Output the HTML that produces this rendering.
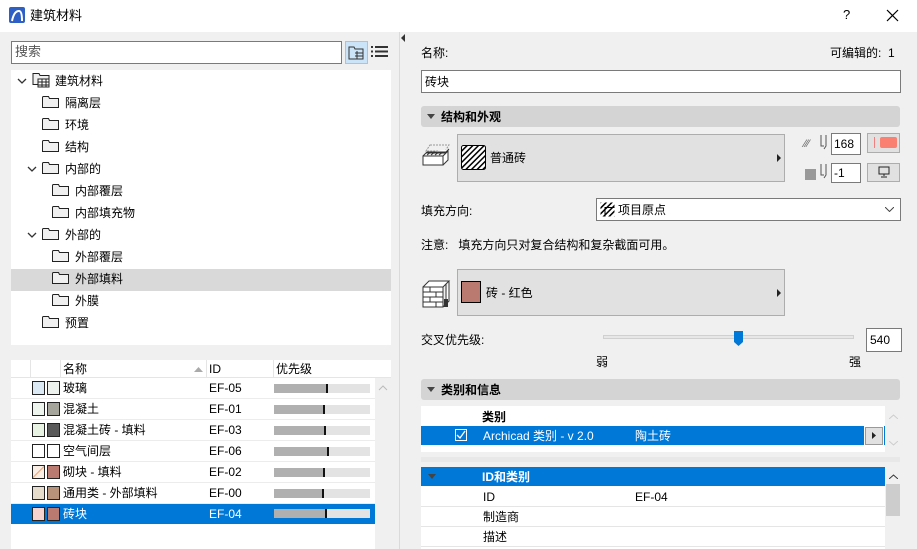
<!DOCTYPE html>
<html><head><meta charset="utf-8"><style>
*{box-sizing:border-box;margin:0;padding:0}
body{width:917px;height:549px;overflow:hidden;background:#f0f0f0;font-family:"Liberation Sans","Noto Sans CJK SC",sans-serif;font-size:12px;color:#000;position:relative}
.a{position:absolute}
.t{position:absolute;white-space:nowrap;line-height:14px}
.fold{position:absolute;width:17px;height:14px}
.row{position:absolute;left:11px;width:364px;height:21px;border-bottom:1px solid #ececec}
.sw{position:absolute;top:3px;width:13px;height:14px;border:1px solid #222}
.bar{position:absolute;left:274px;top:6px;width:96px;height:9px;background:#e3e3e3}
.bar i{position:absolute;left:0;top:0;height:9px;background:#b0b0b0;border-right:2px solid #111}
.sec{position:absolute;left:421px;width:479px;height:21px;background:#d4d4d4;border-radius:3px;font-weight:bold}
.btn{position:absolute;background:#e1e1e1;border:1px solid #adadad}
.inp{position:absolute;background:#fff;border:1px solid #7a7a7a}
</style></head><body>
<!-- title bar -->
<div class="a" style="left:0;top:0;width:917px;height:32px;background:#fff"></div>
<svg class="a" style="left:9px;top:7px" width="16" height="16"><rect x="0" y="0" width="16" height="16" rx="2" fill="#2d5fc4"/><path d="M3 14 Q5 4 10 4 Q13 4 13 14" stroke="#fff" stroke-width="2" fill="none"/></svg>
<div class="t" style="left:30px;top:9px;font-size:13px">建筑材料</div>
<div class="t" style="left:843px;top:8px;font-size:13px">?</div>
<svg class="a" style="left:886px;top:9px" width="13" height="13"><path d="M1 1L12 12M12 1L1 12" stroke="#000" stroke-width="1.2"/></svg>

<!-- search -->
<div class="inp" style="left:11px;top:41px;width:331px;height:23px"></div>
<div class="t" style="left:15px;top:45px;color:#555;font-size:13px">搜索</div>
<div class="a" style="left:345px;top:41px;width:23px;height:23px;background:#cce4f7;border:1px solid #99c9ef"></div>
<svg class="a" style="left:348px;top:45px" width="18" height="16"><path d="M1 2h5l1 2h8v10H1z" fill="none" stroke="#333"/><path d="M7 8h8M7 11h8M9 6v8" stroke="#333"/></svg>
<svg class="a" style="left:371px;top:45px" width="17" height="13"><g fill="#333"><rect x="0" y="1" width="2" height="2"/><rect x="4" y="1" width="13" height="2"/><rect x="0" y="5.5" width="2" height="2"/><rect x="4" y="5.5" width="13" height="2"/><rect x="0" y="10" width="2" height="2"/><rect x="4" y="10" width="13" height="2"/></g></svg>
<svg class="a" style="left:401px;top:34px" width="5" height="8"><path d="M4 0L0 4L4 8z" fill="#333"/></svg>
<div class="a" style="left:399px;top:32px;width:1px;height:517px;background:#dadada"></div>

<!-- tree -->
<div class="a" style="left:11px;top:70px;width:380px;height:275px;background:#fff"></div>
<div class="a" style="left:11px;top:269px;width:380px;height:22px;background:#d9d9d9"></div>
<svg class="a" style="left:0;top:70px" width="140" height="275">
<defs><g id="f"><path d="M0.5 2.5v10h16v-9h-9l-1-2h-5.5z" fill="#f0f0f0" stroke="#222"/></g>
<g id="c"><path d="M0 0l4 4l4-4" fill="none" stroke="#333" stroke-width="1.3"/></g></defs>
<use href="#c" x="18" y="9"/>
<use href="#c" x="28" y="97"/>
<use href="#c" x="28" y="163"/>
<path d="M33 4.5v10h16v-9h-9l-1-2h-6z" fill="#f0f0f0" stroke="#222"/>
<rect x="38" y="9" width="11" height="8" fill="#fff" stroke="#222"/><path d="M38 12h11M38 15h11M42 9v8M46 9v8" stroke="#222"/>
<use href="#f" x="42" y="25"/><use href="#f" x="42" y="47"/><use href="#f" x="42" y="69"/><use href="#f" x="42" y="91"/>
<use href="#f" x="52" y="113"/><use href="#f" x="52" y="135"/>
<use href="#f" x="42" y="157"/>
<use href="#f" x="52" y="179"/><use href="#f" x="52" y="201"/><use href="#f" x="52" y="223"/>
<use href="#f" x="42" y="245"/>
</svg>
<div class="t" style="left:55px;top:74px">建筑材料</div>
<div class="t" style="left:65px;top:96px">隔离层</div>
<div class="t" style="left:65px;top:118px">环境</div>
<div class="t" style="left:65px;top:140px">结构</div>
<div class="t" style="left:65px;top:162px">内部的</div>
<div class="t" style="left:75px;top:184px">内部覆层</div>
<div class="t" style="left:75px;top:206px">内部填充物</div>
<div class="t" style="left:65px;top:228px">外部的</div>
<div class="t" style="left:75px;top:250px">外部覆层</div>
<div class="t" style="left:75px;top:272px">外部填料</div>
<div class="t" style="left:75px;top:294px">外膜</div>
<div class="t" style="left:65px;top:316px">预置</div>

<!-- list -->
<div class="a" style="left:11px;top:360px;width:364px;height:189px;background:#fff"></div>
<div class="a" style="left:375px;top:360px;width:16px;height:189px;background:#f0f0f0"></div>
<div class="a" style="left:11px;top:360px;width:380px;height:18px;background:#fff;border-bottom:1px solid #e5e5e5"></div>
<div class="a" style="left:30px;top:360px;width:1px;height:18px;background:#e5e5e5"></div>
<div class="a" style="left:60px;top:360px;width:1px;height:18px;background:#e5e5e5"></div>
<div class="a" style="left:206px;top:360px;width:1px;height:18px;background:#e5e5e5"></div>
<div class="a" style="left:273px;top:360px;width:1px;height:18px;background:#e5e5e5"></div>
<div class="t" style="left:63px;top:362px">名称</div>
<svg class="a" style="left:194px;top:367px" width="9" height="5"><path d="M0 5L4.5 0L9 5z" fill="#aaa"/></svg>
<div class="t" style="left:209px;top:362px">ID</div>
<div class="t" style="left:276px;top:362px">优先级</div>
<svg class="a" style="left:378px;top:385px" width="10" height="6"><path d="M1 5L5 1L9 5" stroke="#bbb" fill="none"/></svg>

<div class="row" style="top:378px"><div class="sw" style="left:21px;background:#dbe9f5"></div><div class="sw" style="left:36px;background:#eef2ee"></div><div class="t" style="left:52px;top:3px">玻璃</div><div class="t" style="left:198px;top:3px">EF-05</div><div class="bar" style="left:263px"><i style="width:54px"></i></div></div>
<div class="row" style="top:399px"><div class="sw" style="left:21px;background:#eef5ee"></div><div class="sw" style="left:36px;background:#a5a59c"></div><div class="t" style="left:52px;top:3px">混凝土</div><div class="t" style="left:198px;top:3px">EF-01</div><div class="bar" style="left:263px"><i style="width:51px"></i></div></div>
<div class="row" style="top:420px"><div class="sw" style="left:21px;background:#e8f3e3"></div><div class="sw" style="left:36px;background:#5a5a5a"></div><div class="t" style="left:52px;top:3px">混凝土砖 - 填料</div><div class="t" style="left:198px;top:3px">EF-03</div><div class="bar" style="left:263px"><i style="width:52px"></i></div></div>
<div class="row" style="top:441px"><div class="sw" style="left:21px;background:#fff"></div><div class="sw" style="left:36px;background:#fff"></div><div class="t" style="left:52px;top:3px">空气间层</div><div class="t" style="left:198px;top:3px">EF-06</div><div class="bar" style="left:263px"><i style="width:55px"></i></div></div>
<div class="row" style="top:462px"><div class="sw" style="left:21px;background:linear-gradient(135deg,#fbeee5 45%,#f08a50 50%,#fbeee5 55%)"></div><div class="sw" style="left:36px;background:#bb7a70"></div><div class="t" style="left:52px;top:3px">砌块 - 填料</div><div class="t" style="left:198px;top:3px">EF-02</div><div class="bar" style="left:263px"><i style="width:51px"></i></div></div>
<div class="row" style="top:483px"><div class="sw" style="left:21px;background:#e5dccb"></div><div class="sw" style="left:36px;background:#b8937a"></div><div class="t" style="left:52px;top:3px">通用类 - 外部填料</div><div class="t" style="left:198px;top:3px">EF-00</div><div class="bar" style="left:263px"><i style="width:50px"></i></div></div>
<div class="row" style="top:504px;background:#0078d7;color:#fff;border:none;height:20px"><div class="sw" style="left:21px;background:#f7d3d0"></div><div class="sw" style="left:36px;background:#bb7a70"></div><div class="t" style="left:52px;top:3px">砖块</div><div class="t" style="left:198px;top:3px">EF-04</div><div class="bar" style="left:263px;top:5px"><i style="width:53px"></i></div></div>

<!-- right panel -->
<div class="t" style="left:421px;top:46px">名称:</div>
<div class="t" style="left:830px;top:46px">可编辑的:&nbsp; 1</div>
<div class="inp" style="left:421px;top:70px;width:480px;height:23px"></div>
<div class="t" style="left:425px;top:75px">砖块</div>

<div class="sec" style="top:106px"></div>
<svg class="a" style="left:427px;top:114px" width="8" height="5"><path d="M0 0h8L4 5z" fill="#444"/></svg>
<div class="t" style="left:441px;top:110px;font-weight:bold">结构和外观</div>

<svg class="a" style="left:422px;top:144px" width="30" height="28"><path d="M8 1h19l-4 6H4z" fill="none" stroke="#999" stroke-dasharray="2 1"/><path d="M4 9h19l4-4M1 12l4-4h19l3-3M1 12h20v9H1zM21 12l5-5v9l-5 5" fill="#fff" stroke="#333"/><path d="M5 11l4-3M9 11l4-3M13 11l4-3M17 11l4-3" stroke="#333"/></svg>
<div class="btn" style="left:457px;top:134px;width:328px;height:48px"></div>
<svg class="a" style="left:461px;top:145px" width="26" height="26"><defs><pattern id="h" width="4" height="4" patternUnits="userSpaceOnUse" patternTransform="rotate(45)"><rect width="4" height="4" fill="#fff"/><rect width="1.5" height="4" fill="#000"/></pattern></defs><rect x="0.5" y="0.5" width="24" height="24" rx="2" fill="url(#h)" stroke="#000"/></svg>
<div class="t" style="left:490px;top:151px">普通砖</div>
<svg class="a" style="left:777px;top:154px" width="4" height="8"><path d="M0 0L4 4L0 8z" fill="#222"/></svg>

<div class="t" style="left:804px;top:137px;color:#666;font-size:11px">⁄⁄⁄</div>
<svg class="a" style="left:818px;top:134px" width="12" height="18"><path d="M3 1v11h3M8 1v11l-2 3" fill="none" stroke="#555"/></svg>
<div class="inp" style="left:831px;top:133px;width:30px;height:22px"></div>
<div class="t" style="left:834px;top:137px">168</div>
<div class="btn" style="left:867px;top:133px;width:33px;height:20px"></div>
<div class="a" style="left:874px;top:137px;width:1px;height:11px;background:#f08080"></div>
<div class="a" style="left:880px;top:137px;width:17px;height:11px;background:#fa8072;border-radius:2px"></div>
<div class="a" style="left:805px;top:169px;width:11px;height:11px;background:#999"></div>
<svg class="a" style="left:818px;top:163px" width="12" height="18"><path d="M3 1v11h3M8 1v11l-2 3" fill="none" stroke="#555"/></svg>
<div class="inp" style="left:831px;top:163px;width:30px;height:20px"></div>
<div class="t" style="left:834px;top:166px">-1</div>
<div class="btn" style="left:867px;top:163px;width:33px;height:19px"></div>
<svg class="a" style="left:878px;top:166px" width="12" height="12"><rect x="1" y="1" width="10" height="7" fill="none" stroke="#222"/><path d="M6 8v2M3 11h6" stroke="#222"/></svg>

<div class="t" style="left:421px;top:204px">填充方向:</div>
<div class="inp" style="left:596px;top:198px;width:305px;height:23px"></div>
<svg class="a" style="left:600px;top:202px" width="15" height="15"><rect x="0.5" y="0.5" width="14" height="14" fill="url(#h)"/><path d="M5 14.5V5.5h9.5" stroke="#000" fill="none"/></svg>
<div class="t" style="left:618px;top:203px">项目原点</div>
<svg class="a" style="left:885px;top:207px" width="9" height="5"><path d="M0 0L4.5 4.5L9 0" stroke="#444" fill="none"/></svg>

<div class="t" style="left:421px;top:238px">注意:&nbsp;&nbsp; 填充方向只对复合结构和复杂截面可用。</div>

<svg class="a" style="left:422px;top:279px" width="30" height="30"><path d="M1 8h20v20H1zM21 8l6-6H7L1 8M21 28l6-6V2" fill="#fff" stroke="#333"/><path d="M1 13h20M1 18h20M1 23h20M8 8v5M14 13v5M8 18v5M14 23v5M24 5v15" stroke="#333"/><rect x="22" y="20" width="4" height="8" fill="#333"/></svg>
<div class="btn" style="left:457px;top:269px;width:328px;height:47px"></div>
<div class="a" style="left:461px;top:281px;width:20px;height:22px;background:#bb7a70;border:1px solid #000"></div>
<div class="t" style="left:486px;top:286px">砖 - 红色</div>
<svg class="a" style="left:777px;top:289px" width="4" height="8"><path d="M0 0L4 4L0 8z" fill="#222"/></svg>

<div class="t" style="left:421px;top:333px">交叉优先级:</div>
<div class="a" style="left:603px;top:335px;width:251px;height:4px;background:#e7e7e7;border:1px solid #d0d0d0"></div>
<svg class="a" style="left:734px;top:331px" width="9" height="15"><path d="M0 0h9v11l-4.5 4L0 11z" fill="#0078d7"/></svg>
<div class="inp" style="left:866px;top:328px;width:36px;height:24px"></div>
<div class="t" style="left:870px;top:333px">540</div>
<div class="t" style="left:596px;top:355px">弱</div>
<div class="t" style="left:849px;top:355px">强</div>

<div class="sec" style="top:379px"></div>
<svg class="a" style="left:427px;top:387px" width="8" height="5"><path d="M0 0h8L4 5z" fill="#444"/></svg>
<div class="t" style="left:441px;top:383px;font-weight:bold">类别和信息</div>

<div class="a" style="left:421px;top:406px;width:464px;height:46px;background:#fff"></div>
<div class="t" style="left:482px;top:410px;font-weight:bold">类别</div>
<div class="a" style="left:421px;top:426px;width:443px;height:19px;background:#0078d7"></div>
<div class="a" style="left:455px;top:429px;width:12px;height:12px;border:1px solid #fff"></div>
<svg class="a" style="left:456px;top:430px" width="10" height="10"><path d="M1 5l3 3l5-7" stroke="#fff" stroke-width="1.3" fill="none"/></svg>
<div class="t" style="left:483px;top:429px;color:#fff">Archicad 类别 - v 2.0</div>
<div class="t" style="left:635px;top:429px;color:#fff">陶土砖</div>
<div class="a" style="left:865px;top:427px;width:18px;height:18px;background:#e1e1e1;border:1px solid #999"></div>
<svg class="a" style="left:872px;top:432px" width="4" height="7"><path d="M0 0L4 3.5L0 7z" fill="#222"/></svg>
<div class="a" style="left:884px;top:426px;width:1px;height:19px;background:#0078d7"></div>
<svg class="a" style="left:889px;top:414px" width="9" height="5"><path d="M0 5L4.5 1L9 5" stroke="#ccc" fill="none"/></svg>
<svg class="a" style="left:889px;top:441px" width="9" height="5"><path d="M0 0L4.5 4L9 0" stroke="#ccc" fill="none"/></svg>
<div class="a" style="left:421px;top:457px;width:479px;height:5px;background:#e8e8e8"></div>

<div class="a" style="left:421px;top:467px;width:464px;height:82px;background:#fff"></div>
<div class="a" style="left:421px;top:467px;width:464px;height:19px;background:#0078d7"></div>
<svg class="a" style="left:428px;top:474px" width="8" height="5"><path d="M0 0h8L4 5z" fill="#444"/></svg>
<div class="t" style="left:482px;top:470px;color:#fff;font-weight:bold">ID和类别</div>
<div class="t" style="left:483px;top:490px">ID</div>
<div class="t" style="left:635px;top:490px">EF-04</div>
<div class="a" style="left:421px;top:506px;width:464px;height:1px;background:#e5e5e5"></div>
<div class="t" style="left:483px;top:510px">制造商</div>
<div class="a" style="left:421px;top:526px;width:464px;height:1px;background:#e5e5e5"></div>
<div class="t" style="left:483px;top:530px">描述</div>
<div class="a" style="left:421px;top:546px;width:464px;height:1px;background:#e5e5e5"></div>
<div class="a" style="left:885px;top:467px;width:16px;height:82px;background:#f0f0f0"></div>
<svg class="a" style="left:889px;top:474px" width="9" height="5"><path d="M0 5L4.5 1L9 5" stroke="#333" fill="none"/></svg>
<div class="a" style="left:886px;top:484px;width:14px;height:32px;background:#cdcdcd"></div>
</body></html>
